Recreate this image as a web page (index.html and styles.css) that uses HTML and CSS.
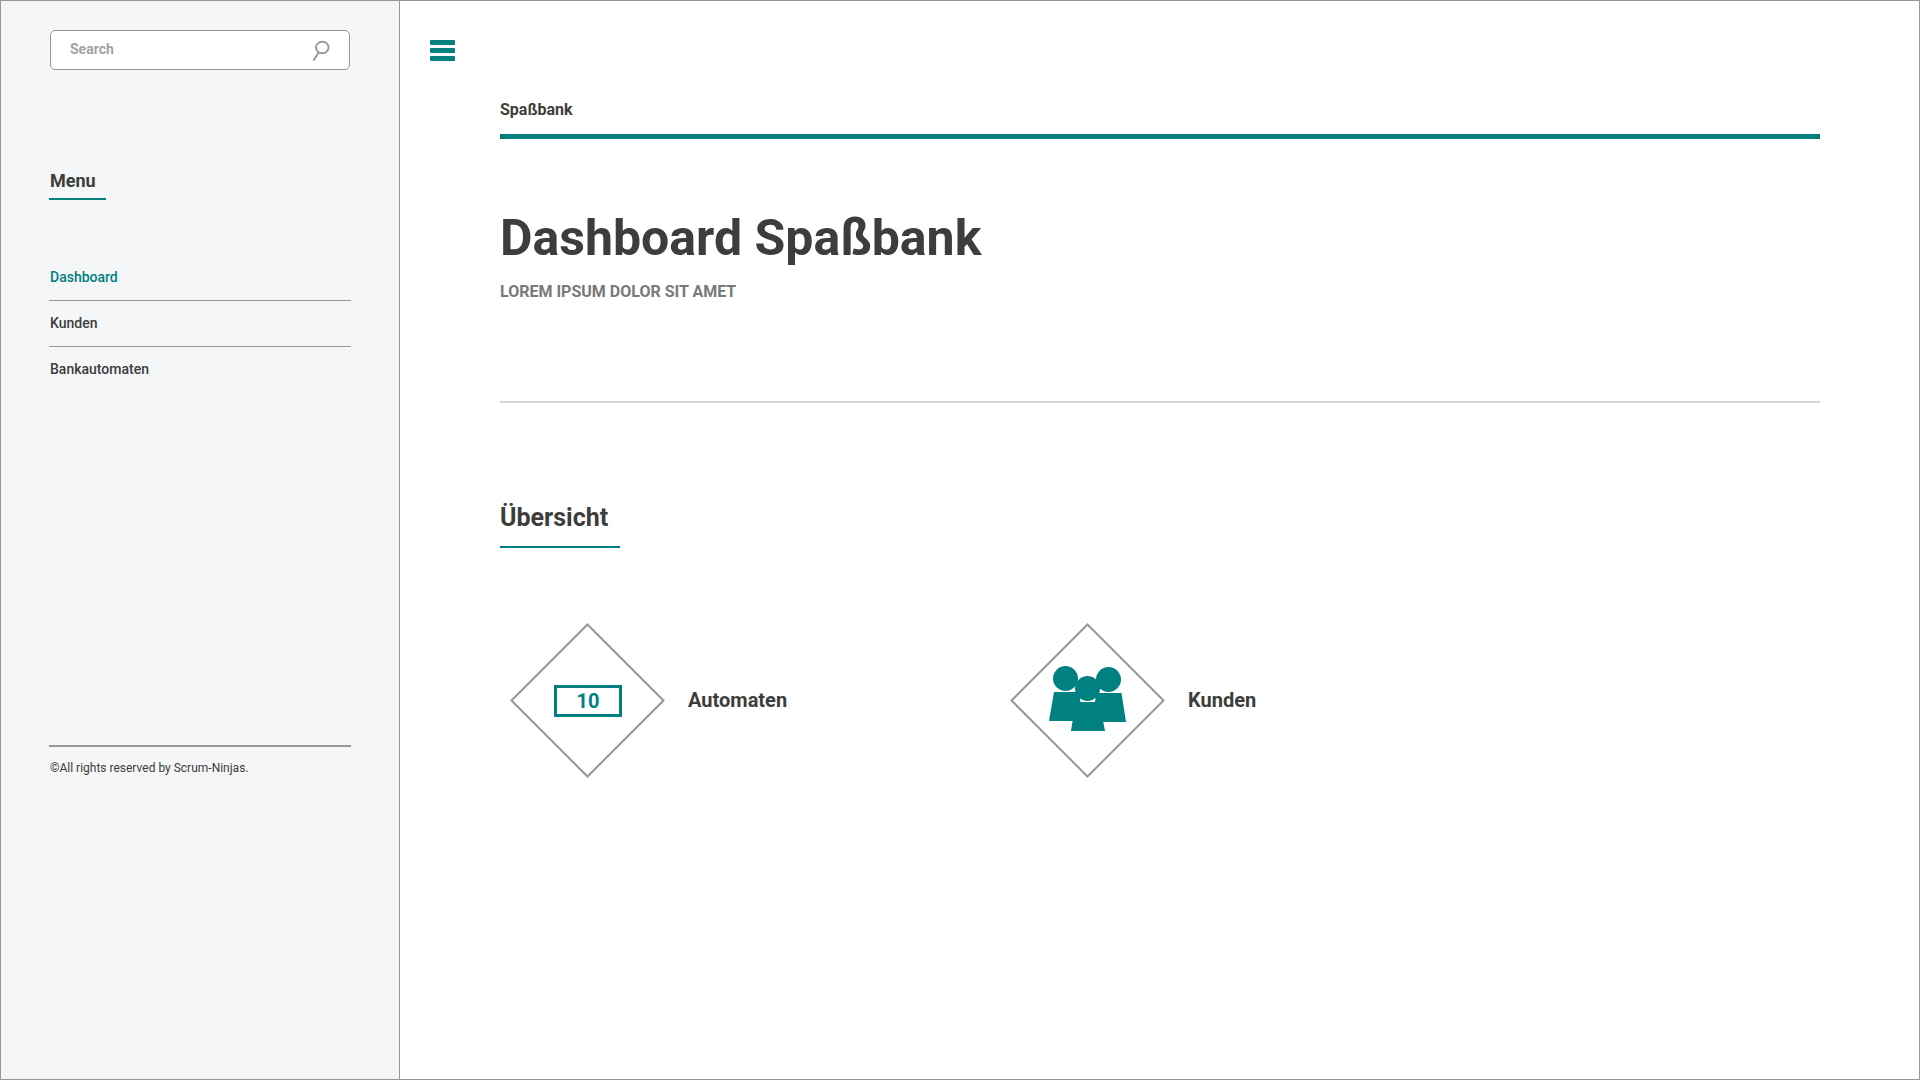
FILE: index.html
```html
<!DOCTYPE html>
<html lang="de">
<head>
<meta charset="utf-8">
<meta name="viewport" content="width=device-width, initial-scale=1">
<title>Dashboard Spaßbank</title>
<link rel="stylesheet" href="styles.css">
</head>
<body>
<div class="app">
  <aside class="sidebar">
    <form class="search" role="search">
      <input class="search-input" type="search" placeholder="Search" aria-label="Search">
      <button class="search-button" type="submit" aria-label="Search">
        <svg width="18" height="21" viewBox="0 0 18 21" fill="none" stroke="#979797">
          <ellipse cx="10.300" cy="7.500" rx="6.300" ry="5.800" stroke-width="1.900"/>
          <path d="M6.900 12.300 1.400 20.600" stroke-width="1.900"/>
        </svg>
      </button>
    </form>
    <h2 class="menu-title">Menu</h2>
    <nav class="menu">
      <a class="menu-link active" href="#dashboard">Dashboard</a>
      <a class="menu-link" href="#kunden">Kunden</a>
      <a class="menu-link" href="#bankautomaten">Bankautomaten</a>
    </nav>
    <footer class="footer">©All rights reserved by Scrum-Ninjas.</footer>
  </aside>
  <main class="main">
    <button class="toggle" type="button" aria-label="Toggle menu">
      <span class="toggle-bar"></span>
      <span class="toggle-bar"></span>
      <span class="toggle-bar"></span>
    </button>
    <div class="content">
      <header class="brand">Spaßbank</header>
      <section class="intro">
        <h1 class="title">Dashboard Spaßbank</h1>
        <p class="subtitle">LOREM IPSUM DOLOR SIT AMET</p>
      </section>
      <h2 class="section-title">Übersicht</h2>
      <div class="cards">
        <a class="card" href="#bankautomaten">
          <span class="diamond">
            <svg class="diamond-frame" viewBox="0 0 156 156" aria-hidden="true"><path d="M77.500 1.500 153.500 77.500 77.500 153.500 1.500 77.500Z"/></svg>
            <span class="note">10</span>
          </span>
          <span class="card-label">Automaten</span>
        </a>
        <a class="card" href="#kunden">
          <span class="diamond">
            <svg class="diamond-frame" viewBox="0 0 156 156" aria-hidden="true">
              <path d="M77.500 1.500 153.500 77.500 77.500 153.500 1.500 77.500Z"/>
              <g class="people">
                <circle cx="55.500" cy="55.500" r="12.500"/>
                <circle cx="98.500" cy="56.500" r="12.500"/>
                <path d="M44 69H69L73.500 98H39Z"/>
                <path d="M86.500 70H111.500L116 99H81.500Z"/>
                <path d="M65.500 79H89.500L95 108H61Z"/>
                <circle cx="77.500" cy="65.500" r="12.500"/>
              </g>
            </svg>
          </span>
          <span class="card-label">Kunden</span>
        </a>
      </div>
    </div>
  </main>
</div>
</body>
</html>
```
FILE: styles.css
```css
* {
  box-sizing: border-box;
}

body {
  margin: 0;
  font-family: Roboto, "Liberation Sans", sans-serif;
  color: #3d3d3b;
}

h1, h2, p {
  margin: 0;
}

a {
  color: inherit;
  text-decoration: none;
}

button {
  padding: 0;
  border: 0;
  background: none;
  cursor: pointer;
}

.app {
  display: flex;
  min-height: 100vh;
  border: 1px solid #979797;
  background: #fff;
}

.sidebar {
  flex: 0 0 399px;
  padding: 29px 48px;
  border-right: 1px solid #979797;
  background: #f4f6f8;
}

.search {
  display: flex;
  align-items: center;
  height: 40px;
  margin: 0 1px;
  padding: 0 19px;
  border: 1px solid #979797;
  border-radius: 5px;
  background: #fff;
}

.search-input {
  flex: 1;
  min-width: 0;
  padding: 0 0 2px;
  border: 0;
  outline: 0;
  background: none;
  font: bold 14px/20px Roboto, "Liberation Sans", sans-serif;
  color: inherit;
}

.search-input::placeholder {
  color: #a3a3a3;
  opacity: 1;
}

.search-button svg {
  display: block;
}

.menu-title {
  width: 57px;
  margin-top: 99px;
  padding: 0 1px 5px;
  border-bottom: 2px solid #008080;
  font-size: 18px;
  line-height: 24px;
}

.menu {
  margin-top: 54px;
}

.menu-link {
  display: block;
  padding: 12px 1px 11px;
  font-size: 14px;
  font-weight: 500;
  line-height: 22px;
}

.menu-link.active {
  padding-bottom: 12px;
  color: #008080;
}

.menu-link + .menu-link {
  padding-top: 11px;
  padding-bottom: 12px;
  border-top: 1px solid #979797;
}

.footer {
  margin-top: 353px;
  padding: 12px 1px;
  border-top: 2px solid #979797;
  font-size: 12px;
  line-height: 18px;
}

.main {
  flex: 1;
  min-width: 0;
  padding: 39px 99px 60px 30px;
}

.toggle {
  display: grid;
  gap: 3px;
  width: 25px;
}

.toggle-bar {
  height: 5px;
  border-radius: 1px;
  background: #008080;
}

.content {
  margin: 39px 0 0 70px;
}

.brand {
  padding-bottom: 14px;
  border-bottom: 5px solid #008080;
  font-size: 16px;
  font-weight: bold;
  line-height: 20px;
}

.intro {
  padding: 69px 0 99px;
  border-bottom: 2px solid #d0d6da;
}

.title {
  font-size: 50px;
  line-height: 60px;
}

.subtitle {
  margin-top: 14px;
  font-size: 16px;
  font-weight: bold;
  line-height: 20px;
  color: #797979;
}

.section-title {
  width: 120px;
  margin-top: 100px;
  padding-bottom: 13px;
  border-bottom: 2px solid #008080;
  font-size: 25px;
  line-height: 30px;
}

.cards {
  display: flex;
  flex-wrap: wrap;
  margin-top: 75px;
}

.card {
  display: flex;
  align-items: center;
  gap: 22px;
  width: 500px;
  padding-left: 10px;
}

.diamond {
  display: grid;
  place-items: center;
  width: 156px;
  height: 156px;
}

.diamond-frame,
.note {
  grid-area: 1 / 1;
}

.diamond-frame {
  width: 156px;
  height: 156px;
  fill: none;
  stroke: #979797;
  stroke-width: 2;
}

.people {
  fill: #008080;
  stroke: none;
}

.note {
  width: 68px;
  border: 3px solid #008080;
  font-size: 20px;
  font-weight: bold;
  line-height: 26px;
  text-align: center;
  color: #008080;
}

.card-label {
  padding-bottom: 3px;
  font-size: 20px;
  font-weight: bold;
  line-height: 24px;
}
```
